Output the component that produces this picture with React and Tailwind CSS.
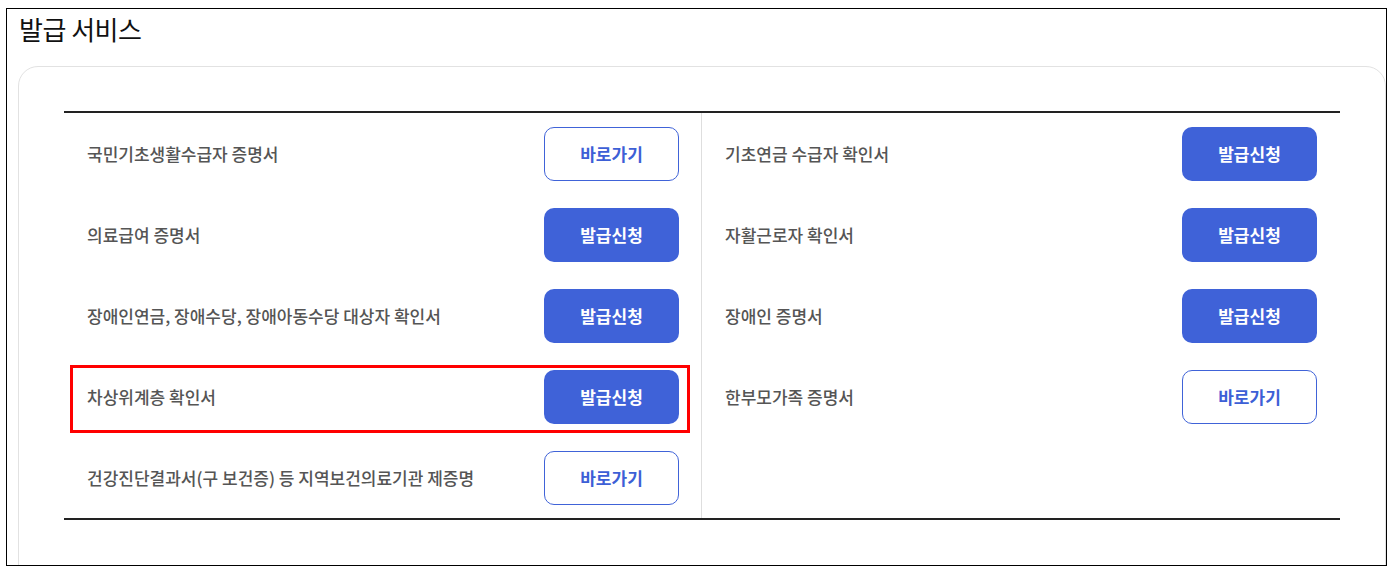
import React from 'react';

const left = [
  { name: '국민기초생활수급자 증명서', type: 'link' },
  { name: '의료급여 증명서', type: 'apply' },
  { name: '장애인연금, 장애수당, 장애아동수당 대상자 확인서', type: 'apply' },
  { name: '차상위계층 확인서', type: 'apply', marked: true },
  { name: '건강진단결과서(구 보건증) 등 지역보건의료기관 제증명', type: 'link' },
];

const right = [
  { name: '기초연금 수급자 확인서', type: 'apply' },
  { name: '자활근로자 확인서', type: 'apply' },
  { name: '장애인 증명서', type: 'apply' },
  { name: '한부모가족 증명서', type: 'link' },
];

function ActionButton({ type }) {
  if (type === 'link') {
    return (
      <button className="w-[135px] h-[54px] rounded-[10px] border border-[#4063d8] bg-white text-[#3d5fd6] text-[17px] font-bold">
        바로가기
      </button>
    );
  }
  return (
    <button className="w-[135px] h-[54px] rounded-[10px] bg-[#3f62d8] text-white text-[17px] font-bold">
      발급신청
    </button>
  );
}

function Row({ item, side }) {
  return (
    <div
      className={
        side === 'left'
          ? 'relative h-[81px] flex items-center justify-between pl-[23px] pr-[22px]'
          : 'relative h-[81px] flex items-center justify-between pl-[23px] pr-[23px]'
      }
    >
      <span className="text-[17px] font-medium text-[#555]">{item.name}</span>
      <ActionButton type={item.type} />
      {item.marked && (
        <div className="absolute left-[6px] top-[9px] right-[11px] bottom-[4px] border-[3px] border-[#ff0000] pointer-events-none" />
      )}
    </div>
  );
}

export default function App() {
  return (
    <div
      className="w-[1394px] h-[570px] bg-white pt-[8px] pl-[6px]"
      style={{ fontFamily: '"Noto Sans CJK KR", "Noto Sans", sans-serif' }}
    >
      <div className="w-[1381px] h-[558px] border border-black overflow-hidden">
        {/* ─── TITLE ─── */}
        <h2 className="pl-[12px] pt-[2px] h-[57px] text-[26px] leading-[36px] text-[#111] tracking-[-0.5px]">
          발급 서비스
        </h2>

        {/* ─── CARD ─── */}
        <div className="ml-[11px] w-[1368px] h-[520px] rounded-[20px] border border-[#e2e2e2] pt-[44px] pl-[45px]">
          <div className="w-[1276px] border-t-2 border-b-2 border-[#222] grid grid-cols-2">
            <div className="border-r border-[#dedede]">
              {left.map((item) => (
                <Row key={item.name} item={item} side="left" />
              ))}
            </div>
            <div>
              {right.map((item) => (
                <Row key={item.name} item={item} side="right" />
              ))}
            </div>
          </div>
        </div>
      </div>
    </div>
  );
}
